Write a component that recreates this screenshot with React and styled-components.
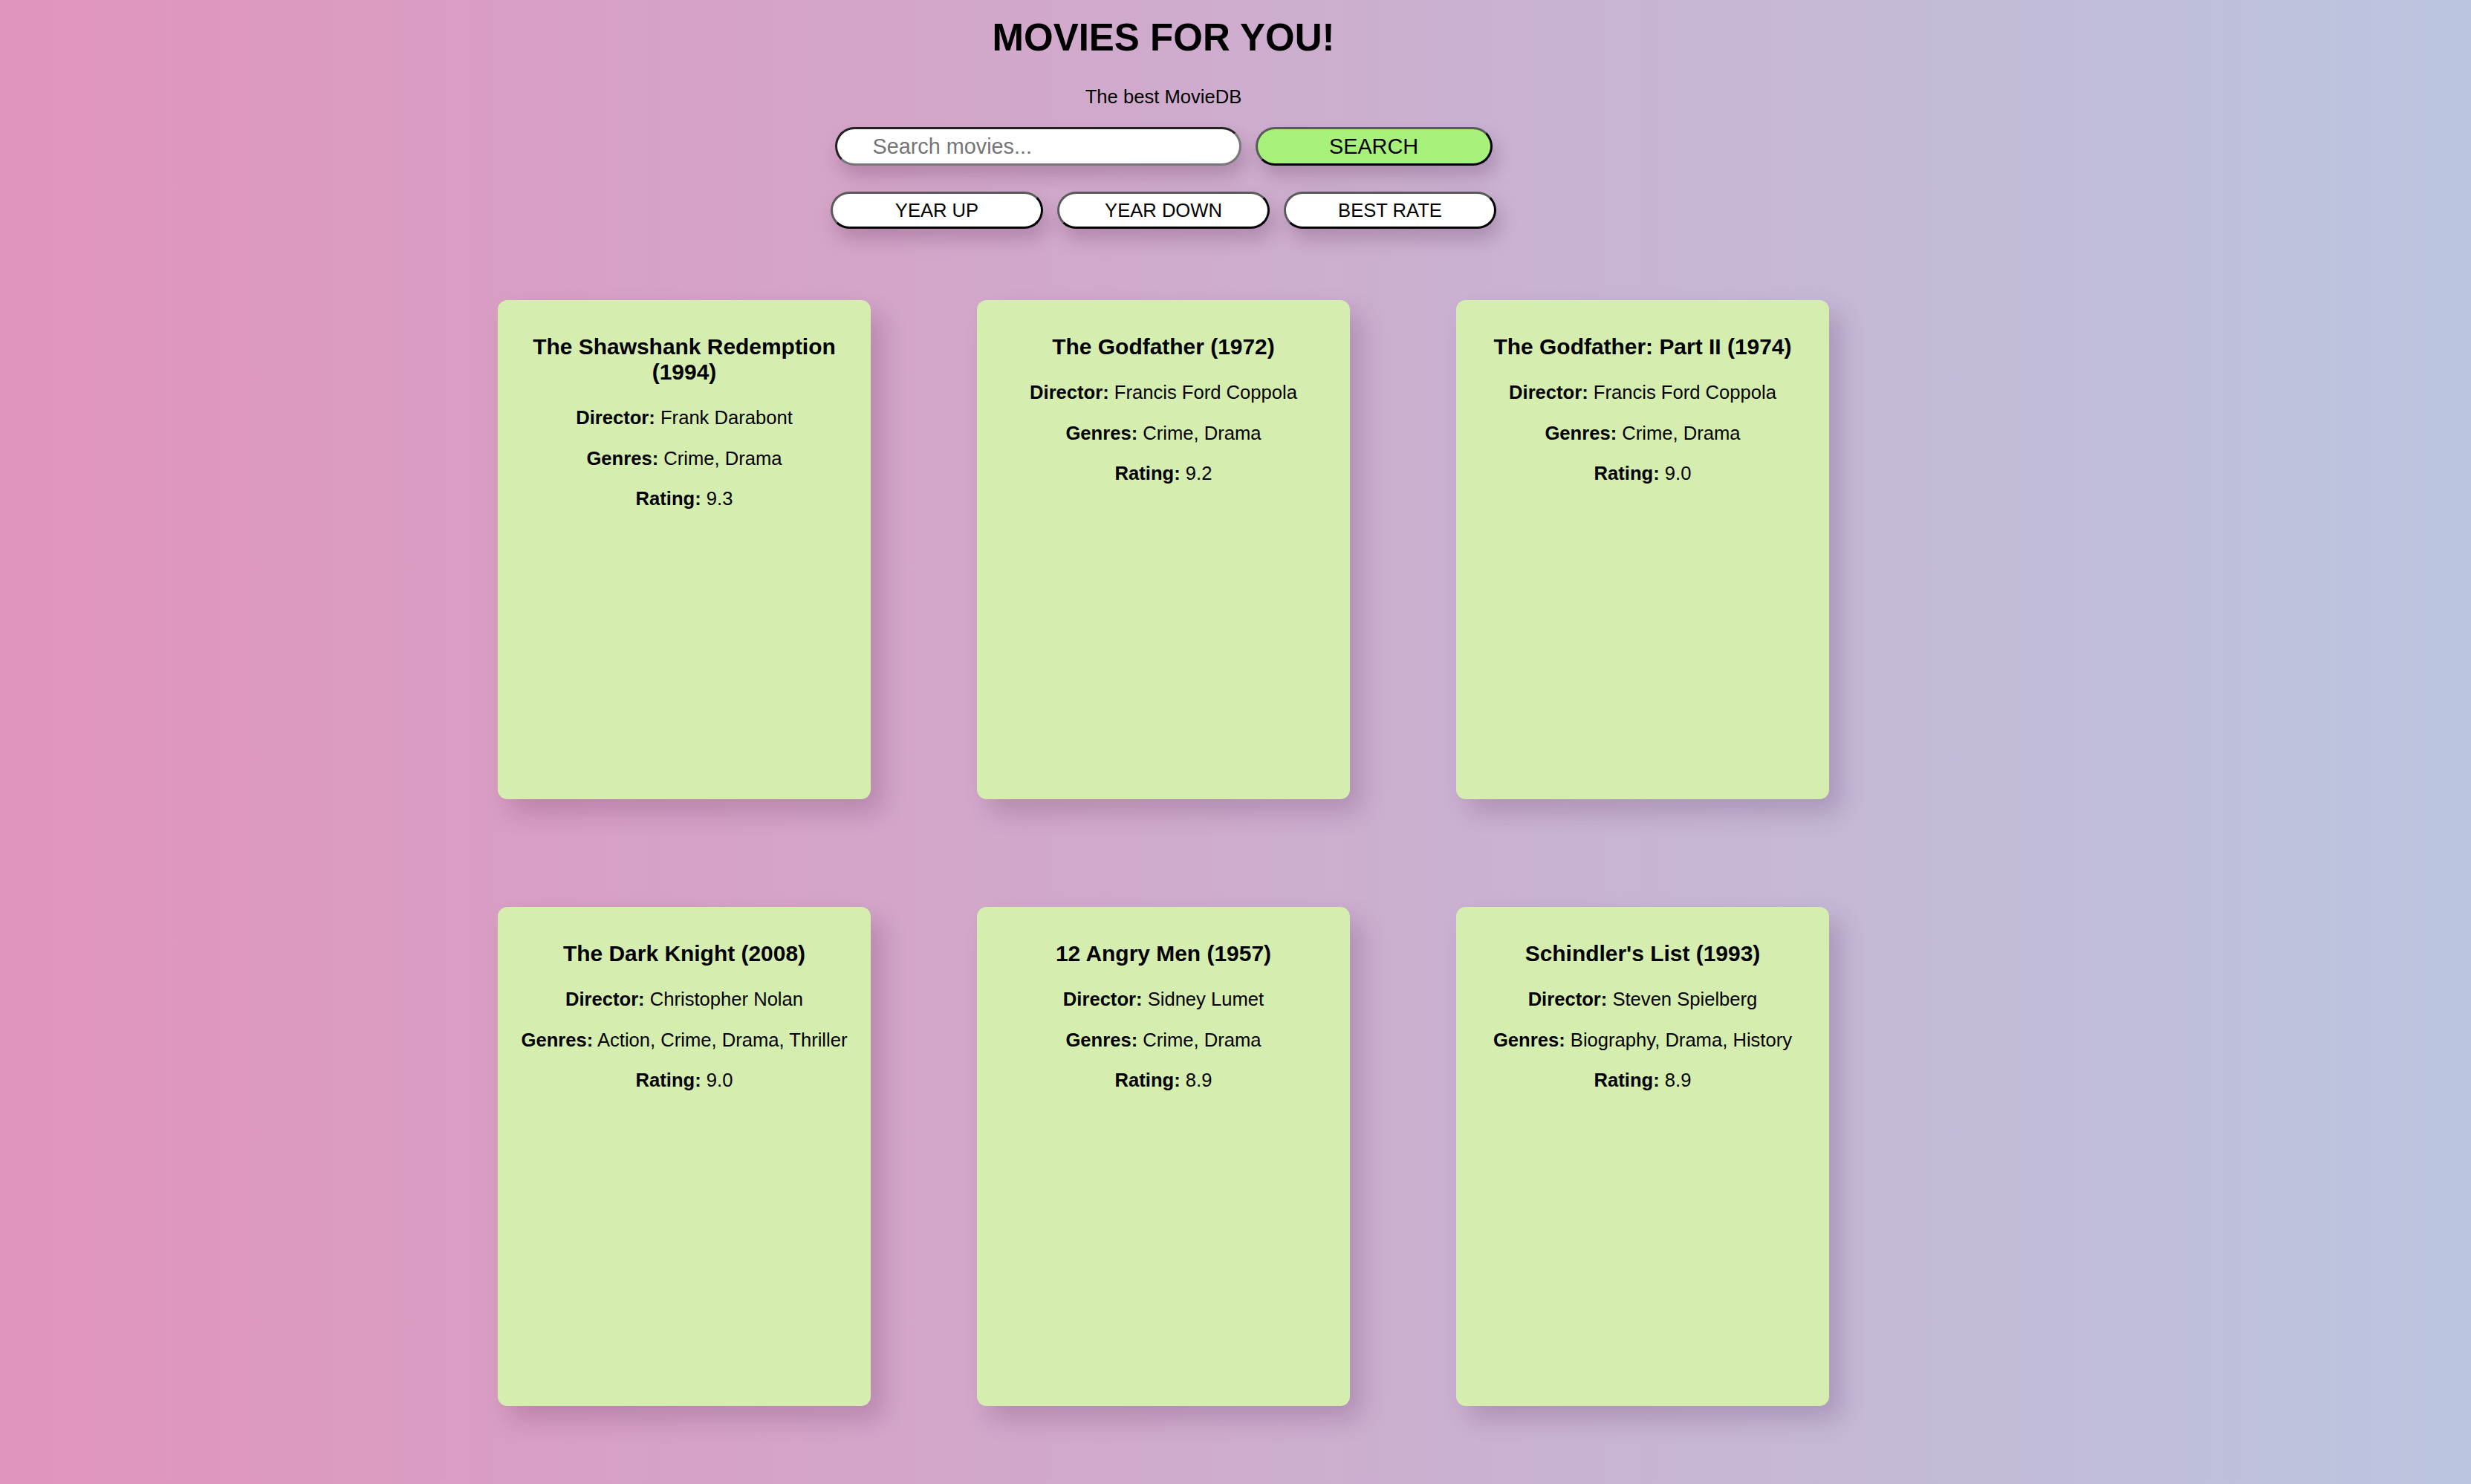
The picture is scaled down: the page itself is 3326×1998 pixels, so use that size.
import React from 'react';
import styled, { createGlobalStyle } from 'styled-components';

// * Global page styles ////////////////
const GlobalStyle = createGlobalStyle`
	html, body {
		margin: 0;
		padding: 0;
	}
	body {
		min-height: 100vh;
		background: linear-gradient(to right, #e194bd, #bbc5df);
		font-family: 'Liberation Sans', Arial, Helvetica, sans-serif;
		color: #000;
	}
`;
/////////////////////////////////////////////////////////////////////////

const movies = [
	{ title: 'The Shawshank Redemption', year: 1994, director: 'Frank Darabont', genres: ['Crime', 'Drama'], rating: '9.3' },
	{ title: 'The Godfather', year: 1972, director: 'Francis Ford Coppola', genres: ['Crime', 'Drama'], rating: '9.2' },
	{ title: 'The Godfather: Part II', year: 1974, director: 'Francis Ford Coppola', genres: ['Crime', 'Drama'], rating: '9.0' },
	{ title: 'The Dark Knight', year: 2008, director: 'Christopher Nolan', genres: ['Action', 'Crime', 'Drama', 'Thriller'], rating: '9.0' },
	{ title: '12 Angry Men', year: 1957, director: 'Sidney Lumet', genres: ['Crime', 'Drama'], rating: '8.9' },
	{ title: "Schindler's List", year: 1993, director: 'Steven Spielberg', genres: ['Biography', 'Drama', 'History'], rating: '8.9' },
];

// * Main page container ////////////////
const Page = styled.main`
	width: 3132px;
	display: flex;
	flex-direction: column;
	align-items: center;
	padding-bottom: 104px;
`;

const Title = styled.h1`
	font-size: 51px;
	font-weight: bold;
	margin: 21px 0 0;
`;

const Subtitle = styled.p`
	font-size: 25.6px;
	margin: 36px 0 26px;
`;
/////////////////////////////////////////////////////////////////////////

// * Search and sort controls ////////////////
const Row = styled.div`
	display: flex;
	gap: 19px;
	margin-top: ${(props) => props.$top || '0px'};
`;

const SearchInput = styled.input`
	box-sizing: border-box;
	width: 547px;
	height: 52px;
	padding: 0 48px;
	font-family: inherit;
	font-size: 28.8px;
	background: #fff;
	border: 3px solid;
	border-color: #222 #777 #777 #222;
	border-radius: 26px;
	box-shadow: 6px 14px 24px rgba(70, 20, 60, 0.22);
	outline: none;

	&::placeholder {
		color: #757575;
	}
`;

const PillButton = styled.button`
	box-sizing: border-box;
	width: ${(props) => (props.$primary ? '319px' : '286px')};
	height: ${(props) => (props.$primary ? '52px' : '50px')};
	padding: 0;
	font-family: inherit;
	font-size: ${(props) => (props.$primary ? '28.8px' : '25.6px')};
	color: #000;
	background-color: ${(props) => (props.$primary ? '#a7f17a' : '#fff')};
	border: 3px solid;
	border-color: #5a5a5a #000 #000 #5a5a5a;
	border-radius: 26px;
	box-shadow: 6px 14px 24px rgba(70, 20, 60, 0.22);
	cursor: pointer;
`;
/////////////////////////////////////////////////////////////////////////

// * Movie cards ////////////////
const Grid = styled.section`
	display: grid;
	grid-template-columns: repeat(3, 502px);
	gap: 145px 143px;
	margin-top: 96px;
`;

const Card = styled.article`
	box-sizing: border-box;
	height: 672px;
	padding: 16px;
	background-color: #d6edb0;
	border-radius: 13px;
	text-align: center;
	box-shadow: 16px 18px 34px rgba(70, 20, 70, 0.2);
`;

const CardTitle = styled.h3`
	font-size: 29.95px;
	font-weight: bold;
	margin: 30px 0;
`;

const Info = styled.p`
	font-size: 25.6px;
	margin: 25.6px 0;
`;
/////////////////////////////////////////////////////////////////////////

const MovieCard = ({ movie }) => (
	<Card>
		<CardTitle>
			{movie.title} ({movie.year})
		</CardTitle>
		<Info>
			<strong>Director:</strong> {movie.director}
		</Info>
		<Info>
			<strong>Genres:</strong> {movie.genres.join(', ')}
		</Info>
		<Info>
			<strong>Rating:</strong> {movie.rating}
		</Info>
	</Card>
);

export default function App() {
	return (
		<>
			<GlobalStyle />
			<Page>
				<Title>MOVIES FOR YOU!</Title>
				<Subtitle>The best MovieDB</Subtitle>
				<Row>
					<SearchInput placeholder="Search movies..." />
					<PillButton $primary>SEARCH</PillButton>
				</Row>
				<Row $top="35px">
					<PillButton>YEAR UP</PillButton>
					<PillButton>YEAR DOWN</PillButton>
					<PillButton>BEST RATE</PillButton>
				</Row>
				<Grid>
					{movies.map((movie) => (
						<MovieCard key={movie.title} movie={movie} />
					))}
				</Grid>
			</Page>
		</>
	);
}
